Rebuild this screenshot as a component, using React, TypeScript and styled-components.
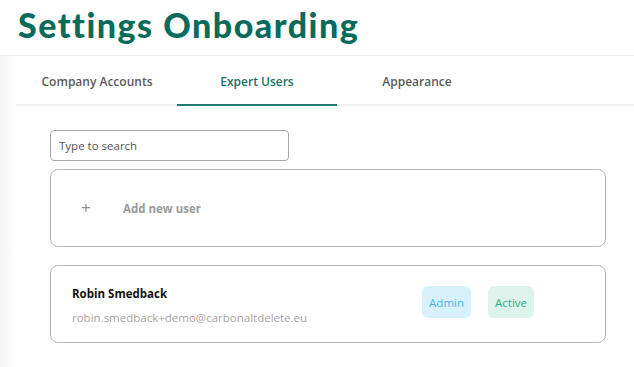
import React from "react";
import styled, { createGlobalStyle } from "styled-components";

const Global = createGlobalStyle`
  html, body { margin: 0; padding: 0; background: #fff; }
  body { font-family: "Open Sans", "Noto Sans", sans-serif; width: 634px; height: 367px; overflow: hidden; }
`;

const Page = styled.div`
  display: flex;
  flex-direction: column;
  width: 634px;
  height: 367px;
  background: #fff;
`;

const Header = styled.header`
  height: 56px;
  padding-left: 18px;
  display: flex;
  align-items: center;
  border-bottom: 1px solid #eeeeee;
  box-sizing: border-box;
`;

const Title = styled.h1`
  margin: 0;
  font-family: "Lato", sans-serif;
  font-weight: 900;
  font-size: 34px;
  color: #0b6b5b;
  letter-spacing: 1.5px;
  line-height: 1;
  margin-top: -6px;
`;

const Body = styled.div`
  flex: 1;
  display: flex;
  background: linear-gradient(to right, #f3f3f3 0px, #fafafa 10px, #ffffff 16px);
`;

const Main = styled.main`
  flex: 1;
  margin-left: 16px;
  background: #fff;
  display: flex;
  flex-direction: column;
`;

const Tabs = styled.nav`
  display: flex;
  height: 48px;
  border-bottom: 2px solid #f1f1f1;
  padding-left: 1px;
`;

const Tab = styled.div<{ $active?: boolean }>`
  width: 160px;
  display: flex;
  align-items: center;
  justify-content: center;
  font-size: 12px;
  font-weight: 600;
  color: ${(p) => (p.$active ? "#1d6e66" : "#5a5a5a")};
  box-sizing: border-box;
  border-bottom: 2px solid ${(p) => (p.$active ? "#1f7a70" : "transparent")};
  margin-bottom: -2px;
  padding-top: 2px;
`;

const Content = styled.div`
  padding: 24px 28px 0 34px;
  display: flex;
  flex-direction: column;
`;

const Search = styled.input`
  width: 239px;
  height: 31px;
  box-sizing: border-box;
  border: 1px solid #a9a9a9;
  border-radius: 4px;
  padding: 0 8px;
  font-family: "Open Sans", sans-serif;
  font-size: 11.5px;
  color: #333;
  outline: none;
  &::placeholder { color: #555; }
`;

const Card = styled.div`
  margin-top: 8px;
  height: 78px;
  box-sizing: border-box;
  border: 1px solid #b5b5b5;
  border-radius: 8px;
  display: flex;
  align-items: center;
`;

const AddCard = styled(Card)`
  padding-left: 30px;
  color: #9a9a9a;
`;

const Plus = styled.span`
  font-size: 17px;
  font-weight: 400;
  width: 42px;
  color: #8e8e8e;
  margin-top: -2px;
`;

const AddLabel = styled.span`
  font-size: 11.5px;
  font-weight: 700;
  color: #9a9a9a;
`;

const UserCard = styled(Card)`
  margin-top: 18px;
  padding: 0 71px 0 21px;
  justify-content: space-between;
`;

const UserInfo = styled.div`
  display: flex;
  flex-direction: column;
  gap: 9px;
  margin-top: 2px;
`;

const Name = styled.div`
  font-size: 11.5px;
  font-weight: 700;
  color: #111;
`;

const Email = styled.div`
  font-size: 11.5px;
  color: #a5a5a5;
`;

const Badges = styled.div`
  display: flex;
  gap: 17px;
  margin-top: -4px;
`;

const Badge = styled.span<{ $bg: string; $fg: string }>`
  height: 32px;
  padding: 0 7px;
  display: flex;
  align-items: center;
  border-radius: 6px;
  background: ${(p) => p.$bg};
  color: ${(p) => p.$fg};
  font-size: 11.5px;
`;

export default function App() {
  return (
    <Page>
      <Global />
      <Header>
        <Title>Settings Onboarding</Title>
      </Header>
      <Body>
        <Main>
          <Tabs>
            <Tab>Company Accounts</Tab>
            <Tab $active>Expert Users</Tab>
            <Tab>Appearance</Tab>
          </Tabs>
          <Content>
            <Search placeholder="Type to search" />
            <AddCard>
              <Plus>+</Plus>
              <AddLabel>Add new user</AddLabel>
            </AddCard>
            <UserCard>
              <UserInfo>
                <Name>Robin Smedback</Name>
                <Email>robin.smedback+demo@carbonaltdelete.eu</Email>
              </UserInfo>
              <Badges>
                <Badge $bg="#d8f2fd" $fg="#48b3ee">Admin</Badge>
                <Badge $bg="#def3ec" $fg="#2db089">Active</Badge>
              </Badges>
            </UserCard>
          </Content>
        </Main>
      </Body>
    </Page>
  );
}
